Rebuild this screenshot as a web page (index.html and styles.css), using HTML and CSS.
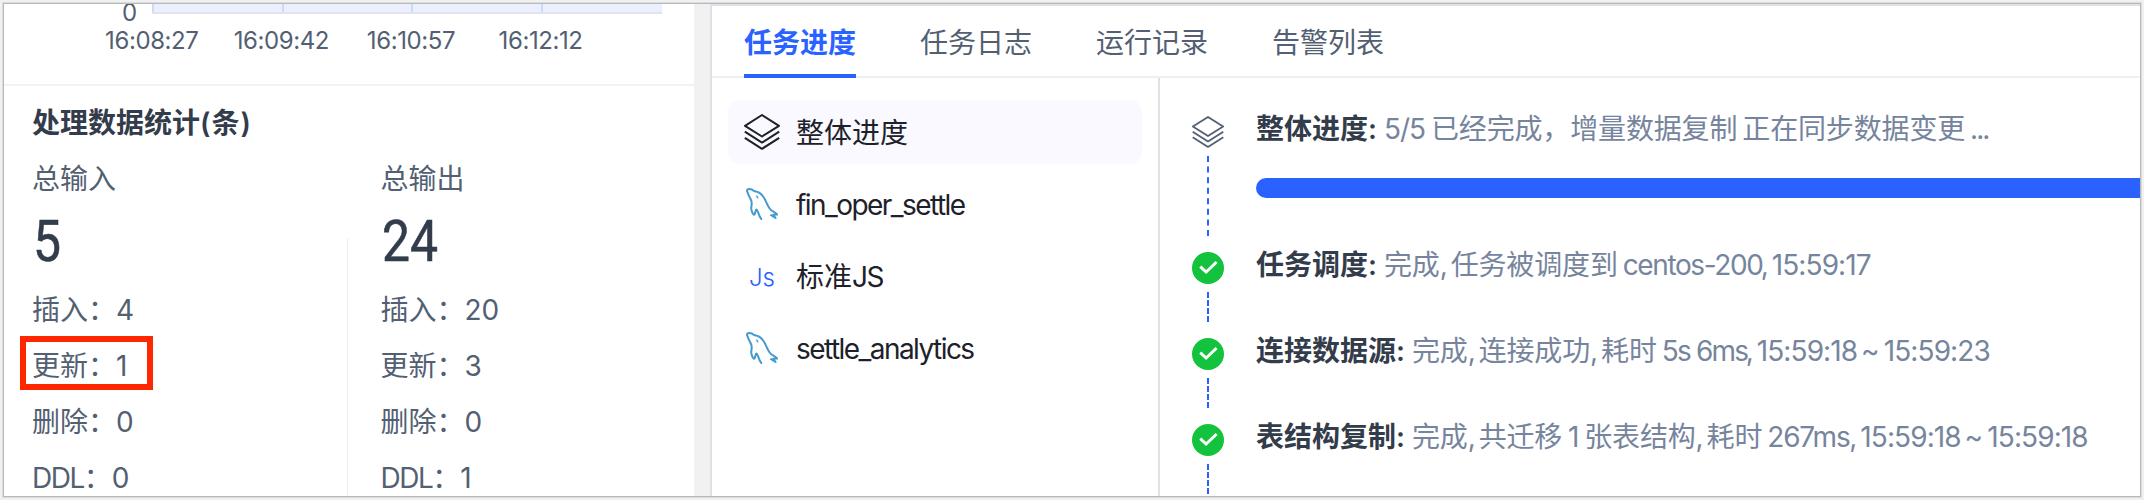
FILE: index.html
```html
<!DOCTYPE html>
<html lang="zh-CN">
<head>
<meta charset="utf-8">
<title>任务进度</title>
<link rel="stylesheet" href="styles.css">
</head>
<body>
<svg class="defs" width="0" height="0">
  <symbol id="layers" viewBox="0 0 36 36"><path d="M18 1 35 11.8 18 22.5 1 11.8Z M.8 17.6 18 28.6 35.2 17.6 M.8 23.8 18 34.8 35.2 23.8" fill="none" stroke="currentColor" stroke-linejoin="round"/></symbol>
  <symbol id="dolphin" viewBox="0 0 32 32"><path d="M4.500 11 C3.600 9 1.200 4.500 1 2.300 C1.200 .7 5 .4 8 3 C13 3.600 16.500 6.500 19 11.500 C21.500 16.500 23 21.500 26.500 23.200 C28.500 24.200 30.600 25.600 31.200 26.600 L27.200 26.800 L29.600 30 L25 27.200 M4.500 11 C7.200 14 4.800 18 5.300 21.200 C5.800 24.500 7.500 27.200 8.400 26.600 C9.400 25.500 9.300 21.500 10.500 21.500 C11.800 21.700 12.500 28 15.300 31" fill="none" stroke="currentColor" stroke-width="2" stroke-linecap="round" stroke-linejoin="round"/><path d="M10.800 8.200l1 1.600" stroke="currentColor" stroke-width="1.400" stroke-linecap="round"/></symbol>
  <symbol id="done" viewBox="0 0 32 32"><circle cx="16" cy="16" r="16" fill="#13c23d"/><path d="M8.300 14.600 14.100 20 24.600 10" fill="none" stroke="#fff" stroke-width="3"/></symbol>
</svg>
<div class="window">
  <section class="stats">
    <div class="chart">
      <div class="plot-row"><span class="y-zero">0</span><div class="plot"><i></i><i></i><i></i><i></i></div></div>
      <div class="x-axis"><span>16:08:27</span><span>16:09:42</span><span>16:10:57</span><span>16:12:12</span></div>
    </div>
    <h2 class="title">处理数据统计<span class="unit">(条)</span></h2>
    <div class="totals">
      <div class="total">
        <div class="label">总输入</div><div class="number"><span>5</span></div>
        <div class="row">插入：4</div><div class="row marked">更新：1</div><div class="row">删除：0</div><div class="row"><span class="ddl">DDL</span>：0</div>
      </div>
      <div class="total">
        <div class="label">总输出</div><div class="number"><span>24</span></div>
        <div class="row">插入：20</div><div class="row">更新：3</div><div class="row">删除：0</div><div class="row"><span class="ddl">DDL</span>：1</div>
      </div>
    </div>
  </section>
  <section class="main">
    <nav class="tabs"><a class="tab active">任务进度</a><a class="tab">任务日志</a><a class="tab">运行记录</a><a class="tab">告警列表</a></nav>
    <div class="content">
      <aside class="nodes">
        <div class="node selected"><svg class="node-icon layers"><use href="#layers"/></svg><span class="name">整体进度</span></div>
        <div class="node"><svg class="node-icon fish"><use href="#dolphin"/></svg><span class="name en">fin_oper_settle</span></div>
        <div class="node"><span class="node-icon js">Js</span><span class="name">标准<span class="en">JS</span></span></div>
        <div class="node"><svg class="node-icon fish"><use href="#dolphin"/></svg><span class="name en">settle_analytics</span></div>
      </aside>
      <div class="steps">
        <div class="step first"><div class="rail"><svg class="step-icon layers"><use href="#layers"/></svg><i class="dash"></i></div>
          <div class="body"><p><b>整体进度:</b><span class="en ratio">5/5</span>已经完成，增量数据复制<span class="gap"></span>正在同步数据变更<span class="gap"></span><span class="en dots">...</span></p><div class="progress"></div></div></div>
        <div class="step"><div class="rail"><svg class="step-icon"><use href="#done"/></svg><i class="dash"></i></div>
          <div class="body"><p><b>任务调度:</b>完成<span class="en comma">,</span>任务被调度到<span class="gap"></span><span class="en host">centos-200</span><span class="en comma">,</span><span class="en time">15:59:17</span></p></div></div>
        <div class="step"><div class="rail"><svg class="step-icon"><use href="#done"/></svg><i class="dash"></i></div>
          <div class="body"><p><b>连接数据源:</b>完成<span class="en comma">,</span>连接成功<span class="en comma">,</span>耗时<span class="gap"></span><span class="en dur">5s 6ms</span><span class="en comma">,</span><span class="en time">15:59:18</span><span class="en tilde">~</span><span class="en time">15:59:23</span></p></div></div>
        <div class="step"><div class="rail"><svg class="step-icon"><use href="#done"/></svg><i class="dash"></i></div>
          <div class="body"><p><b>表结构复制:</b>完成<span class="en comma">,</span>共迁移<span class="en one">1</span>张表结构<span class="en comma">,</span>耗时<span class="gap"></span><span class="en dur short">267ms</span><span class="en comma">,</span><span class="en time">15:59:18</span><span class="en tilde">~</span><span class="en time">15:59:18</span></p></div></div>
      </div>
    </div>
  </section>
</div>
</body>
</html>
```
FILE: styles.css
```css
* { box-sizing: border-box; margin: 0; padding: 0; }
body { width: 2144px; height: 500px; padding: 4px; background: #f1f1f1; overflow: hidden; font: 28px/40px Inter, "Noto Sans CJK SC", sans-serif; color: #535f72; }
.defs { display: block; position: absolute; }
.window { display: flex; width: 2136px; height: 492px; background: #fff; overflow: hidden; box-shadow: 0 0 0 1px #b9b9b9, 0 0 0 2px #dcdcdc; white-space: nowrap; }

.stats { width: 690px; flex: none; }
.chart { height: 82px; border-bottom: 2px solid #f2f2f2; }
.plot-row { display: flex; height: 10px; padding-left: 118px; }
.y-zero { width: 30px; font-size: 24px; line-height: 18px; letter-spacing: -.5px; }
.plot { display: flex; width: 510px; height: 10px; background: #ebeffe; border-bottom: 2px solid #e0e3ea; }
.plot i { width: 129.600px; flex: none; border-left: 2px solid #c8dcf8; }
.x-axis { display: flex; margin-left: 83px; padding-top: 7px; font-size: 24px; letter-spacing: -.4px; }
.x-axis span { width: 129.600px; text-align: center; }
.title { padding: 17px 0 0 28px; font-size: 28px; line-height: 40px; font-weight: 600; color: #333c4a; }
.unit { letter-spacing: 1px; }
.totals { display: flex; }
.total { width: 348px; padding: 16px 0 0 28px; }
.total:first-child { width: 345px; height: 353px; background: linear-gradient(#eee, #eee) 343px 95px / 2px 400px no-repeat; }
.total + .total { padding-left: 33px; }
.number { height: 86px; margin-bottom: 5px; padding-left: 1px; font: 400 58px/85px Roboto, sans-serif; color: #333c4a; }
.number span { display: inline-block; transform: scaleX(.86); transform-origin: left; -webkit-text-stroke: .6px #333c4a; }
.row { height: 40px; margin-bottom: 16px; }
.marked { box-sizing: content-box; width: 115px; height: 42px; line-height: 48px; padding-left: 6px; margin: -10px 0 12px -12px; border: 6px solid #ff2600; }
.ddl { letter-spacing: -1.500px; }

.main { flex: 1; min-width: 0; margin-left: 16px; border-left: 2px solid #dee2e8; border-top: 2px solid #dee2e8; box-shadow: -16px 0 0 #f1f1f1; }
.tabs { display: flex; gap: 64px; height: 72px; padding: 0 32px; border-bottom: 2px solid #f0f0f0; }
.tab { height: 72px; line-height: 74px; }
.tab.active { color: #2962ff; font-weight: 600; border-bottom: 4px solid #2962ff; }
.content { display: flex; height: 418px; }
.nodes { width: 448px; flex: none; padding: 22px 16px; border-right: 2px solid #dee2e8; color: #1d2129; }
.node { display: flex; align-items: center; height: 64px; margin-bottom: 8px; padding-left: 16px; border-radius: 12px; }
.node.selected { background: #f9f9ff; }
.node-icon { width: 36px; height: 36px; margin-right: 16px; flex: none; }
.name { padding-top: 1px; }
.node .en { letter-spacing: -1.550px; }
.fish { width: 32px; height: 32px; margin: 0 18px 0 2px; color: #4798d0; }
.layers { stroke-width: 2; }
.js { color: #2962ff; font-size: 24px; font-weight: 300; text-align: center; line-height: 40px; }

.steps { flex: 1; min-width: 0; padding: 38px 0 0 32px; }
.step { display: flex; height: 86px; }
.step.first { height: 136px; }
.rail { width: 64px; flex: none; display: flex; flex-direction: column; }
.step-icon { width: 32px; height: 32px; }
.step-icon.layers { color: #535f72; }
.dash { height: 30px; width: 0; margin: 8px 0 0 15px; border-left: 2px dashed #2962ff; }
.first .dash { height: 80px; }
.body { flex: 1; min-width: 0; margin-top: -7px; color: #76859d; letter-spacing: -.15px; }
.body b { display: inline-block; color: #333c4a; font-weight: 600; margin-right: 7px; letter-spacing: 0; }
.body .en { display: inline-block; letter-spacing: -1px; }
.gap { display: inline-block; width: 5px; }
.progress { height: 20px; margin-top: 29px; background: #2962ff; border-radius: 10px 0 0 10px; }
.body .comma { width: 11px; }
.body .ratio { width: 47px; }
.body .dots { letter-spacing: -2px; }
.body .host { width: 138px; letter-spacing: -1.400px; }
.body .dur { width: 84px; letter-spacing: -1.800px; }
.body .dur.short { width: 82px; letter-spacing: -1.200px; }
.body .time { width: 99px; letter-spacing: -.900px; }
.body .tilde { width: 28px; text-align: center; }
.body .one { width: 22px; text-align: center; }
```
